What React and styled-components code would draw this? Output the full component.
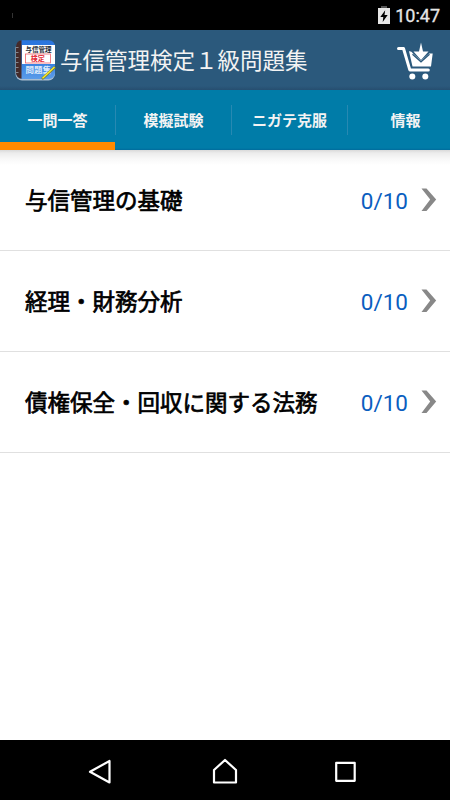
import React from "react";
import styled, { createGlobalStyle } from "styled-components";

const GlobalStyle = createGlobalStyle`
  * { box-sizing: border-box; }
  body { margin: 0; background: #fff; overflow: hidden; }
`;

const Screen = styled.div`
  width: 450px;
  height: 800px;
  display: flex;
  flex-direction: column;
  overflow: hidden;
  background: #fff;
  font-family: Roboto, "Noto Sans CJK JP", sans-serif;
`;

const StatusBar = styled.header`
  height: 30px;
  flex: none;
  display: flex;
  align-items: center;
  justify-content: flex-end;
  gap: 5px;
  padding: 0 10px 0 0;
  background: #000;
`;

const StatusMark = styled.span`
  width: 1px;
  height: 5px;
  margin: 0 auto 0 12px;
  background: #333;
`;

const Clock = styled.span`
  font-size: 18px;
  font-weight: 400;
  line-height: 28px;
  padding-top: 1px;
  color: #e6e6e6;
  -webkit-text-stroke: 0.3px #e6e6e6;
`;

const ActionBar = styled.div`
  height: 60px;
  flex: none;
  display: flex;
  align-items: center;
  padding: 0 15px;
  background: linear-gradient(#2b597c 0 56px, #264e70);
`;

const Title = styled.h1`
  flex: 1;
  margin: 0 0 2px 4px;
  font-family: "Noto Sans CJK JP", sans-serif;
  font-size: 22.5px;
  font-weight: 400;
  line-height: 32px;
  color: #f3f3f3;
  white-space: nowrap;
`;

const Tabs = styled.nav`
  height: 60px;
  flex: none;
  display: flex;
  background: linear-gradient(#007ca8 0 58px, #006b9c);
`;

const Tab = styled.div`
  flex: none;
  width: ${(p) => (p.$active ? 115 : 116)}px;
  height: 60px;
  display: flex;
  align-items: center;
  border-bottom: ${(p) => (p.$active ? "8px solid #ff8a00" : "0")};
`;

const TabLabel = styled.span`
  flex: 1;
  height: 30px;
  margin-top: ${(p) => (p.$active ? 8 : 0)}px;
  border-left: ${(p) => (p.$divider ? "1px solid #2789b2" : "0")};
  font-family: "Noto Sans CJK JP", sans-serif;
  font-size: 15px;
  font-weight: 700;
  line-height: 30px;
  text-align: center;
  color: #f3f3f3;
`;

const List = styled.main`
  flex: 1;
  background: linear-gradient(#d9d9d9 0, #ececec 3px, #f8f8f8 9px, #fff 15px);
`;

const Row = styled.div`
  height: 101px;
  display: flex;
  align-items: center;
  padding: 0 13px 0 25px;
  border-bottom: 1px solid #e0e0e0;
`;

const RowTitle = styled.span`
  flex: 1;
  margin-bottom: 2px;
  font-family: "Noto Sans CJK JP", sans-serif;
  font-size: 22.5px;
  line-height: 32px;
  color: #000;
  -webkit-text-stroke: 0.7px #000;
`;

const Count = styled.span`
  margin: 2px 13px 0 0;
  font-size: 22.5px;
  line-height: 30px;
  color: #0a5ec0;
`;

const NavBar = styled.footer`
  height: 60px;
  flex: none;
  display: flex;
  justify-content: space-between;
  align-items: center;
  padding: 4px 93px 0 85px;
  background: #000;
`;

const BookText = styled.text`
  font-family: "Noto Sans CJK JP", sans-serif;
  font-weight: 700;
  text-anchor: middle;
`;

const Battery = () => (
  <svg width="12" height="18" viewBox="0 0 12 18">
    <path d="M0 2h12v16H0z" fill="#e6e6e6" />
    <path d="M3 0h6v2H3z" fill="#555" />
    <path d="M7.2 4.2 2.3 11h3l-.6 5 5-7H6.500z" fill="#000" />
  </svg>
);

const BookIcon = () => (
  <svg width="41" height="41" viewBox="0 0 41 41">
    <defs>
      <linearGradient id="cover" x1="0" y1="0" x2="0" y2="1">
        <stop offset="0" stopColor="#2a75de" />
        <stop offset=".55" stopColor="#347fe0" />
        <stop offset="1" stopColor="#5b9ce9" />
      </linearGradient>
    </defs>
    <rect x=".5" y="2" width="39.5" height="38.5" rx="6.5" fill="#a9bdd0" />
    <path d="M7 .2h27a6 6 0 0 1 6 6V33a6 6 0 0 1-6 6H7a6 6 0 0 1-6-6V6.200a6 6 0 0 1 6-6z" fill="url(#cover)" />
    <path d="M6.500.2v38.600A6 6 0 0 1 1 33V6.200a6 6 0 0 1 5.500-6z" fill="#442b2a" />
    <path d="M.5 7.500h3m-3 5h3m-3 5h3m-3 5h3m-3 5h3m-3 5h3" stroke="#85868d" strokeWidth="1" />
    <rect x="7" y="5" width="33" height="19" fill="#fff" />
    <rect x="10.500" y="14" width="25" height="9" fill="#fff" stroke="#ed6066" strokeWidth=".8" />
    <BookText x="23.400" y="12" fontSize="6.500" fill="#252b36">与信管理</BookText>
    <BookText x="22.700" y="21" fontSize="7" fill="#e32734">検定</BookText>
    <BookText x="23.200" y="33" fontSize="8.500" fill="#dceafa">問題集</BookText>
    <path d="m27 39 13-12" stroke="#7c8038" strokeWidth="2.500" />
    <path d="m27.500 38.300 12-11.300" stroke="#ffed23" strokeWidth="1.400" />
  </svg>
);

const CartIcon = () => (
  <svg width="38" height="40" viewBox="0 -2.5 38 40" fill="none">
    <path d="M1.500 6h5l6.300 21.400h18.500" stroke="#fff" strokeWidth="3" strokeLinecap="round" strokeLinejoin="round" />
    <path d="M12 8.700c1.800-.2 3 .7 3.800 2.100l8.200 7.400 8.200-7.100h3.500L34 24H15.500z" fill="#fff" />
    <path d="m15.500 11.800 8.500 7.400 8.500-7.400" stroke="#2b597c" strokeWidth="1.400" />
    <path d="M24 0 26 9h5.500L24 17.500 16.500 9H22z" fill="#fff" />
    <circle cx="15.300" cy="34" r="3" fill="#fff" />
    <circle cx="28.300" cy="34" r="3" fill="#fff" />
  </svg>
);

const Chevron = () => (
  <svg width="16" height="24" viewBox="0 0 16 24">
    <path d="M.5.5h5l9.700 11-9.700 11.500h-5l8.700-11.500z" fill="#888" />
  </svg>
);

const BackIcon = () => (
  <svg width="30" height="30" viewBox="0 0 30 30" fill="none" stroke="#fff" strokeWidth="2.2" strokeLinejoin="round">
    <path d="M24.500 4v21.500L5 14.800z" />
  </svg>
);

const HomeIcon = () => (
  <svg width="30" height="30" viewBox="0 0 30 30" fill="none" stroke="#fff" strokeWidth="2.2" strokeLinejoin="round">
    <path d="M4 25.500V13L15 3l11 10v12.500z" />
  </svg>
);

const RecentIcon = () => (
  <svg width="22" height="22" viewBox="0 0 22 22" fill="none" stroke="#fff" strokeWidth="2.2" strokeLinejoin="round">
    <rect x="1.200" y="1.800" width="18.500" height="18" />
  </svg>
);

const tabs = ["一問一答", "模擬試験", "ニガテ克服", "情報"];
const topics = ["与信管理の基礎", "経理・財務分析", "債権保全・回収に関する法務"];

export default function App() {
  return (
    <>
      <GlobalStyle />
      <Screen>
        <StatusBar>
          <StatusMark />
          <Battery />
          <Clock>10:47</Clock>
        </StatusBar>
        <ActionBar>
          <BookIcon />
          <Title>与信管理検定１級問題集</Title>
          <CartIcon />
        </ActionBar>
        <Tabs>
          {tabs.map((label, i) => (
            <Tab key={label} $active={i === 0}>
              <TabLabel $active={i === 0} $divider={i > 0}>{label}</TabLabel>
            </Tab>
          ))}
        </Tabs>
        <List>
          {topics.map((topic) => (
            <Row key={topic}>
              <RowTitle>{topic}</RowTitle>
              <Count>0/10</Count>
              <Chevron />
            </Row>
          ))}
        </List>
        <NavBar>
          <BackIcon />
          <HomeIcon />
          <RecentIcon />
        </NavBar>
      </Screen>
    </>
  );
}
